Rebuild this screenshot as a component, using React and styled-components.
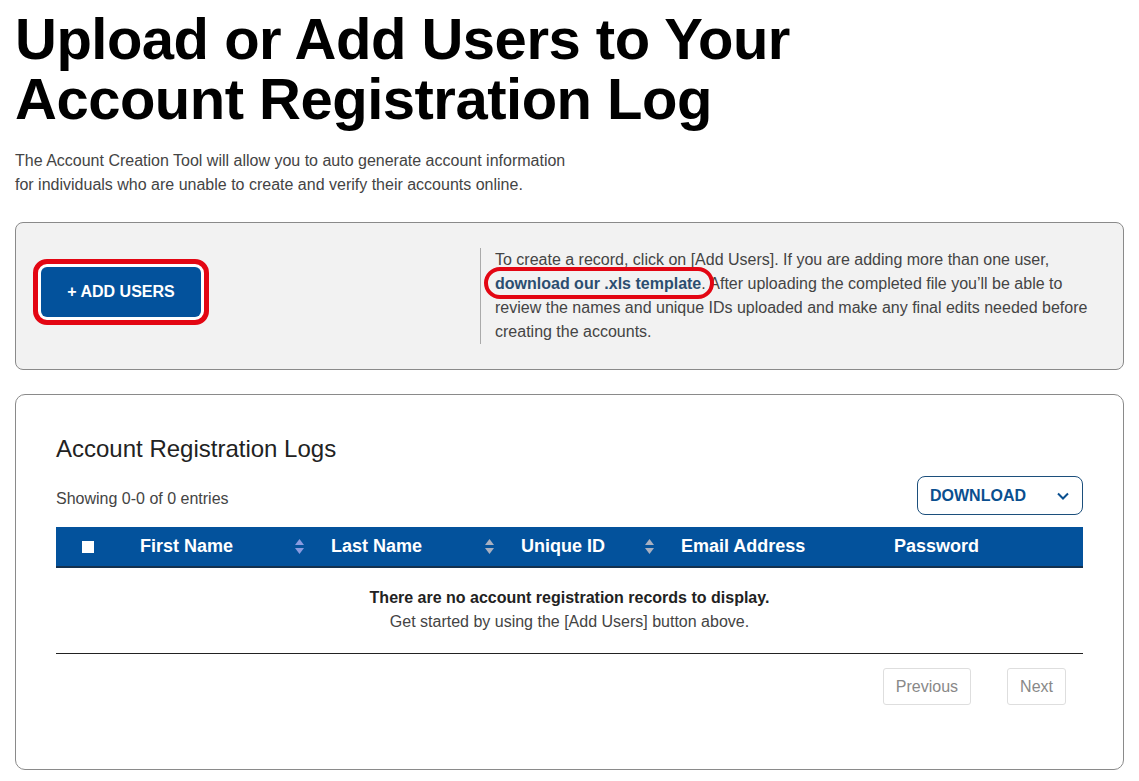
import { createGlobalStyle, styled } from 'styled-components';

const GlobalStyle = createGlobalStyle`
    body {
        margin: 0;
        background: #fff;
        font-family: 'Liberation Sans', Arial, sans-serif;
        color: #333;
    }
`;

const Page = styled.div`
    padding: 9px 15px 10px;
`;

const Title = styled.h1`
    margin: 0;
    font-size: 58px;
    line-height: 60px;
    font-weight: 700;
    color: #000;
    letter-spacing: -0.5px;
`;

const Intro = styled.p`
    margin: 20px 0 25px;
    font-size: 16px;
    line-height: 24px;
    color: #444;
`;

const ActionPanel = styled.section`
    display: grid;
    grid-template-columns: 464px 1fr;
    align-items: center;
    background: #f2f2f2;
    border: 1px solid #8a8a8a;
    border-radius: 8px;
    padding: 25px 0;
    margin-bottom: 24px;
`;

const ButtonCell = styled.div`
    padding: 0 0 8px 17px;
`;

const Highlight = styled.span`
    display: inline-block;
    padding: 3px;
    border: 5px solid #e30613;
    border-radius: 14px;
    background: #fff;
`;

const AddButton = styled.button`
    display: block;
    width: 160px;
    height: 50px;
    border: 0;
    border-radius: 6px;
    background: #03529c;
    color: #fff;
    font-family: inherit;
    font-size: 16px;
    font-weight: 700;
`;

const Help = styled.div`
    border-left: 1px solid #aaa;
    padding: 0 20px 0 14px;
    font-size: 16px;
    line-height: 24px;
    color: #444;
`;

const TemplateLink = styled.a`
    position: relative;
    font-weight: 700;
    color: #2b4e70;
    text-decoration: none;
    &::after {
        content: '';
        position: absolute;
        left: -11px;
        right: -13px;
        top: -8px;
        bottom: -7px;
        border: 4px solid #e30613;
        border-radius: 16px;
    }
`;

const LogPanel = styled.section`
    border: 1px solid #8a8a8a;
    border-radius: 10px;
    padding: 40px 40px 64px;
`;

const LogTitle = styled.h2`
    margin: 0 0 13px;
    font-size: 24px;
    line-height: 28px;
    font-weight: 400;
    color: #222;
`;

const Toolbar = styled.div`
    display: flex;
    justify-content: space-between;
    align-items: center;
    margin-bottom: 12px;
`;

const Showing = styled.span`
    padding-top: 6px;
    font-size: 16px;
    color: #444;
`;

const DownloadButton = styled.button`
    display: flex;
    align-items: center;
    justify-content: space-between;
    width: 166px;
    height: 39px;
    padding: 0 12px;
    background: #fff;
    border: 1px solid #1c4f7c;
    border-radius: 8px;
    color: #0a4f8f;
    font-family: inherit;
    font-size: 16px;
    font-weight: 700;
`;

const Table = styled.table`
    width: 100%;
    border-collapse: collapse;
    table-layout: fixed;
`;

const HeadCell = styled.th`
    position: relative;
    box-sizing: border-box;
    width: ${(p) => p.$w}px;
    height: 40px;
    padding: 0 0 0 15px;
    background: #03529c;
    border-bottom: 2px solid #14314f;
    color: #fff;
    font-size: 18px;
    font-weight: 700;
    text-align: left;
`;

const CheckBox = styled.span`
    display: block;
    width: 12px;
    height: 12px;
    margin-left: 11px;
    background: #fff;
`;

const SortIcon = styled.svg`
    position: absolute;
    right: 12px;
    top: 12px;
`;

const EmptyCell = styled.td`
    padding: 18px 0 19px;
    border-bottom: 1px solid #222;
    text-align: center;
    font-size: 16px;
    line-height: 24px;
    color: #444;
    strong {
        color: #222;
    }
`;

const Pager = styled.div`
    display: flex;
    justify-content: flex-end;
    gap: 36px;
    padding: 14px 17px 0 0;
`;

const PageButton = styled.button`
    height: 37px;
    padding: 0 12px;
    background: #fff;
    border: 1px solid #dedede;
    border-radius: 3px;
    color: #888;
    font-family: inherit;
    font-size: 16px;
`;

const columns = [
    { label: 'First Name', w: 191, sort: '#8a9be0' },
    { label: 'Last Name', w: 190, sort: '#a9b0c0' },
    { label: 'Unique ID', w: 160, sort: '#a9b0c0' },
    { label: 'Email Address', w: 213 },
    { label: 'Password', w: 204 },
];

function Sort({ color }) {
    return (
        <SortIcon width="9" height="15" viewBox="0 0 9 15">
            <path d="M4.5 0 L9 6 H0 Z" fill={color} />
            <path d="M4.5 15 L9 9 H0 Z" fill={color} />
        </SortIcon>
    );
}

export default function App() {
    return (
        <Page>
            <GlobalStyle />
            <Title>
                Upload or Add Users to Your
                <br />
                Account Registration Log
            </Title>
            <Intro>
                The Account Creation Tool will allow you to auto generate account information
                <br />
                for individuals who are unable to create and verify their accounts online.
            </Intro>

            <ActionPanel>
                <ButtonCell>
                    <Highlight>
                        <AddButton>+ ADD USERS</AddButton>
                    </Highlight>
                </ButtonCell>
                <Help>
                    To create a record, click on [Add Users]. If you are adding more than one user,
                    <br />
                    <TemplateLink href="#">download our .xls template</TemplateLink>. After uploading
                    the completed file you’ll be able to
                    <br />
                    review the names and unique IDs uploaded and make any final edits needed before
                    <br />
                    creating the accounts.
                </Help>
            </ActionPanel>

            <LogPanel>
                <LogTitle>Account Registration Logs</LogTitle>
                <Toolbar>
                    <Showing>Showing 0-0 of 0 entries</Showing>
                    <DownloadButton>
                        DOWNLOAD
                        <svg width="14" height="14" viewBox="0 0 14 14">
                            <path d="M2 4.5 L7 9.5 L12 4.5" fill="none" stroke="#0a4f8f" strokeWidth="2" />
                        </svg>
                    </DownloadButton>
                </Toolbar>
                <Table>
                    <thead>
                        <tr>
                            <HeadCell $w={69}>
                                <CheckBox />
                            </HeadCell>
                            {columns.map((c) => (
                                <HeadCell key={c.label} $w={c.w}>
                                    {c.label}
                                    {c.sort && <Sort color={c.sort} />}
                                </HeadCell>
                            ))}
                        </tr>
                    </thead>
                    <tbody>
                        <tr>
                            <EmptyCell colSpan={6}>
                                <strong>There are no account registration records to display.</strong>
                                <br />
                                Get started by using the [Add Users] button above.
                            </EmptyCell>
                        </tr>
                    </tbody>
                </Table>
                <Pager>
                    <PageButton>Previous</PageButton>
                    <PageButton>Next</PageButton>
                </Pager>
            </LogPanel>
        </Page>
    );
}
